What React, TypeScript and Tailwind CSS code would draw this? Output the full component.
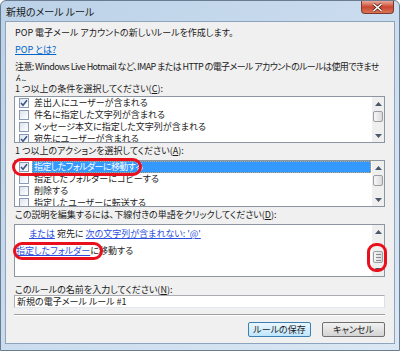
import React from 'react';

// Small triangle used by the scroll bar arrow buttons
function Arrow({ down }: { down?: boolean }) {
  return (
    <svg width="7" height="4" viewBox="0 0 7 4">
      <path d={down ? 'M0 0 L7 0 L3.5 4 Z' : 'M0 4 L7 4 L3.5 0 Z'} fill="#4b586b" />
    </svg>
  );
}

function ScrollBar({ thumbTop, thumbH, grip }: { thumbTop: number; thumbH: number; grip?: boolean }) {
  return (
    <div className="flex h-full w-[12px] flex-col bg-[#efefef]">
      <div className="flex h-[13px] items-center justify-center">
        <Arrow />
      </div>
      <div className="flex-1">
        <div
          className="mx-[1px] flex flex-col items-center justify-center gap-[2px] rounded-[2px] border border-[#9a9ea4] bg-gradient-to-r from-[#f7f7f7] to-[#dadada]"
          style={{ marginTop: thumbTop, height: thumbH }}
        >
          {grip && (
            <>
              <div className="h-px w-[5px] bg-[#8a8a8a]" />
              <div className="h-px w-[5px] bg-[#8a8a8a]" />
              <div className="h-px w-[5px] bg-[#8a8a8a]" />
            </>
          )}
        </div>
      </div>
      <div className="flex h-[12px] items-center justify-center">
        <Arrow down />
      </div>
    </div>
  );
}

function CheckBox({ checked }: { checked?: boolean }) {
  return (
    <span className="flex h-[10px] w-[10px] shrink-0 items-center justify-center border border-[#8a9ab5] bg-gradient-to-br from-[#dde4ee] to-white">
      {checked && (
        <svg width="8" height="8" viewBox="0 0 8 8">
          <path d="M1 4 L3 6.2 L7 1.2" stroke="#3c5488" strokeWidth="1.6" fill="none" />
        </svg>
      )}
    </span>
  );
}

function Row({ label, checked, selected }: { label: string; checked?: boolean; selected?: boolean }) {
  return (
    <div className="flex h-[12px] items-center gap-[3px] pl-[4px] whitespace-nowrap">
      <CheckBox checked={checked} />
      <span
        className={
          selected
            ? 'mr-[1px] flex h-[12px] flex-1 items-center border border-dotted border-[#c9a46a] bg-[#3399ff] px-[1px] tracking-[-0.6px] text-white'
            : 'px-[2px]'
        }
      >
        {label}
      </span>
    </div>
  );
}

function ListBox({ rows }: { rows: { label: string; checked?: boolean; selected?: boolean }[] }) {
  return (
    <div className="flex h-[47px] overflow-hidden border border-[#8c96a3] bg-white">
      <div className="flex flex-1 flex-col overflow-hidden">
        {rows.map(r => (
          <Row key={r.label} {...r} />
        ))}
      </div>
      <ScrollBar thumbTop={1} thumbH={11} />
    </div>
  );
}

// Label with an underlined access key
function Label({ text, accel, className }: { text: string; accel: string; className?: string }) {
  return (
    <div className={`h-[12px] leading-[12px] whitespace-nowrap ${className ?? ''}`}>
      {text}(<span className="underline">{accel}</span>):
    </div>
  );
}

const Oval = ({ className }: { className: string }) => (
  <div className={`pointer-events-none absolute rounded-[9px] border-[3px] border-[#e8101c] ${className}`} />
);

export default function App() {
  return (
    <div className="h-[351px] w-[400px] font-['Noto_Sans_CJK_JP','Noto_Sans',sans-serif] text-[9px] text-[#1b1b1b] [font-feature-settings:'palt']">
      <div className="flex h-full flex-col rounded-t-[6px] border border-[#6b7c90] bg-gradient-to-br from-[#bcd2e8] via-[#cadcee] to-[#dbe8f4] px-[4px] pb-[6px]">
        {/* title bar */}
        <div className="flex h-[20px] items-start">
          <div className="pt-[5px] pl-[1px] text-[10px] leading-[12px] text-[#1a1a1a]">新規のメール ルール</div>
          <div className="flex-1" />
          <div className="mr-[1px] flex h-[13px] w-[33px] items-center justify-center rounded-b-[4px] border border-t-0 border-[#7a3a2e] bg-gradient-to-b from-[#e9a99a] via-[#c9452f] to-[#dc7457]">
            <svg width="11" height="9" viewBox="0 0 11 9">
              <path d="M1.5 1 L9.5 8 M9.5 1 L1.5 8" stroke="#5a2418" strokeWidth="3" />
              <path d="M1.5 1 L9.5 8 M9.5 1 L1.5 8" stroke="#ffffff" strokeWidth="1.6" />
            </svg>
          </div>
        </div>

        {/* client area */}
        <div className="flex flex-1 flex-col border border-[#8ea4bc] bg-[#f0f0f0] pl-[8px] pr-[9px]">
          <div className="mt-[5px] h-[12px] leading-[12px] pl-[1px]">POP 電子メール アカウントの新しいルールを作成します。</div>
          <div className="mt-[5px] h-[12px] leading-[12px] pl-[1px]">
            <span className="text-[#0066cc] underline">POP とは?</span>
          </div>
          <div className="mt-[5px] h-[20px] overflow-hidden leading-[12px] pl-[1px] tracking-[-0.6px]">
            <div className="whitespace-nowrap">
              注意: Windows Live Hotmail など、IMAP または HTTP の電子メール アカウントのルールは使用できませ
            </div>
            <div>ん。</div>
          </div>

          <Label className="mt-[2px] pl-[1px]" text="1 つ以上の条件を選択してください" accel="C" />
          <div className="mt-[1px]">
            <ListBox
              rows={[
                { label: '差出人にユーザーが含まれる', checked: true },
                { label: '件名に指定した文字列が含まれる' },
                { label: 'メッセージ本文に指定した文字列が含まれる' },
                { label: '宛先にユーザーが含まれる', checked: true },
              ]}
            />
          </div>

          <Label className="mt-[2px] pl-[1px]" text="1 つ以上のアクションを選択してください" accel="A" />
          <div className="relative mt-[3px]">
            <ListBox
              rows={[
                { label: '指定したフォルダーに移動する', checked: true, selected: true },
                { label: '指定したフォルダーにコピーする' },
                { label: '削除する' },
                { label: '指定したユーザーに転送する' },
              ]}
            />
            <Oval className="-left-[2px] -top-[2px] h-[18px] w-[130px]" />
          </div>

          <Label className="mt-[2px] pl-[1px]" text="この説明を編集するには、下線付きの単語をクリックしてください" accel="D" />
          <div className="relative mt-[3px] flex h-[53px] border border-[#8c96a3] bg-white">
            <div className="flex flex-1 flex-col">
              <div className="mt-[3px] h-[12px] pl-[14px] leading-[12px] whitespace-nowrap">
                <span className="text-[#2a4ee0] underline">または</span> 宛先に{' '}
                <span className="text-[#2a4ee0] underline">次の文字列が含まれない: '@'</span>
              </div>
              <div className="mt-[5px] h-[12px] pl-[1px] leading-[12px] whitespace-nowrap">
                <span className="text-[#2a4ee0] underline">指定したフォルダー</span>に移動する
              </div>
            </div>
            <ScrollBar thumbTop={13} thumbH={12} grip />
            <Oval className="-left-[2px] top-[17px] h-[18px] w-[90px]" />
            <Oval className="left-[352px] top-[18px] h-[29px] w-[20px]" />
          </div>

          <div className="mt-[7px] h-[11px] leading-[11px] pl-[1px]">
            このルールの名前を入力してください(<span className="underline">N</span>):
          </div>
          <div className="flex h-[13px] items-center border border-[#abadb3] border-b-[#e3e9ef] border-r-[#dbdfe6] bg-white pl-[2px]">
            新規の電子メール ルール #1
          </div>

          <div className="mt-[6px] border-t border-b border-t-[#a0a0a0] border-b-white" />

          <div className="mt-[6px] flex justify-end gap-[11px]">
            <button className="flex h-[15px] w-[63px] items-center justify-center rounded-[2px] border border-[#3c7fb1] bg-gradient-to-b from-[#eaf6fd] to-[#bee6fd] text-[9px] leading-none">
              ルールの保存
            </button>
            <button className="flex h-[15px] w-[63px] items-center justify-center rounded-[2px] border border-[#707070] bg-gradient-to-b from-[#f2f2f2] to-[#d4d4d4] text-[9px] leading-none">
              キャンセル
            </button>
          </div>
        </div>
      </div>
    </div>
  );
}
